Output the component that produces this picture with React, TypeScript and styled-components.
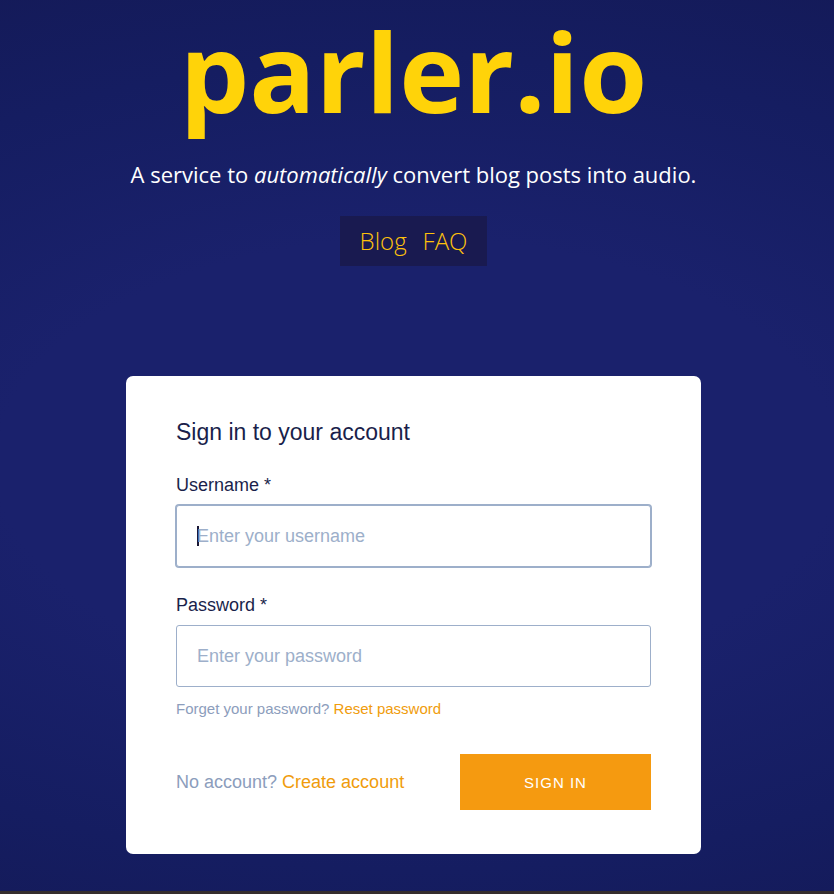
import React from "react";
import styled, { createGlobalStyle } from "styled-components";

const GlobalStyle = createGlobalStyle`
  *, *::before, *::after { box-sizing: border-box; }
  body { margin: 0; background: #141a58; }
`;

const Page = styled.div`
  min-height: 100vh;
  display: flex;
  flex-direction: column;
  align-items: center;
  padding-right: 7px;
  border-bottom: 3px solid #352d2d;
  background: radial-gradient(ellipse 120% 60% at 50% 52%, #1a216c 0%, #1a216c 42%, #151d61 76%, #141a58 100%);
  font-family: "Liberation Sans", Arial, sans-serif;
`;

const Header = styled.header`
  display: flex;
  flex-direction: column;
  align-items: center;
  font-family: "Open Sans", "Segoe UI", sans-serif;
`;

const Title = styled.h1`
  margin: 0;
  font-size: 110px;
  line-height: 140px;
  font-weight: 700;
  color: #ffd309;
`;

const Tagline = styled.p`
  margin: 18px 0 0;
  font-size: 22px;
  line-height: 32px;
  color: #fff;
  text-align: center;
`;

const Nav = styled.nav`
  display: flex;
  gap: 16px;
  margin-top: 26px;
  padding: 8px 20px;
  background: #191a50;
`;

const NavLink = styled.a`
  font-size: 24px;
  line-height: 34px;
  font-weight: 300;
  color: #ffc20c;
  text-decoration: none;
`;

const Card = styled.form`
  width: 100%;
  max-width: 575px;
  margin: 110px 0 37px;
  padding: 40px 50px 44px;
  border-radius: 7px;
  background: #fff;
`;

const CardTitle = styled.h2`
  margin: 0 0 26px;
  font-size: 23px;
  line-height: 32px;
  font-weight: 400;
  color: #1a1f4b;
`;

const Field = styled.div`
  display: flex;
  flex-direction: column;
`;

const Label = styled.label`
  margin-bottom: 9px;
  font-size: 18px;
  line-height: 22px;
  color: #1a1f4b;
`;

const Input = styled.input`
  height: 62px;
  padding: 0 20px;
  border: 1px solid #9dafca;
  border-radius: 3px;
  background: #fff;
  font: 18px "Liberation Sans", Arial, sans-serif;
  color: #1a1f4b;
  outline: none;

  &::placeholder { color: #9dafca; opacity: 1; }
  &:focus { box-shadow: 0 0 0 1px #9dafca; }

  /* A steady two-pixel caret while the box is empty. */
  &:focus:placeholder-shown {
    caret-color: transparent;
    background: #fff linear-gradient(#1a1734, #1a1734) 20px center / 2px 20px no-repeat;
  }
`;

const Fields = styled.div`
  display: flex;
  flex-direction: column;
  gap: 27px;
`;

const Hint = styled.p<{ $size: number }>`
  margin: 0;
  font-size: ${({ $size }) => $size}px;
  line-height: 20px;
  color: #8c9dbc;
`;

const TextLink = styled.a`
  color: #f09c0c;
  text-decoration: none;
`;

const PasswordHint = styled.div`
  margin-top: 12px;
`;

const Footer = styled.div`
  display: flex;
  flex-wrap: wrap;
  align-items: center;
  justify-content: space-between;
  gap: 16px;
  margin-top: 35px;
`;

const SubmitButton = styled.button`
  min-width: 191px;
  height: 56px;
  border: 0;
  background: #f59a10;
  color: #fff;
  font: 15px "Liberation Sans", Arial, sans-serif;
  letter-spacing: 1px;
  text-transform: uppercase;
`;

export default function App() {
  return (
    <>
      <GlobalStyle />
      <Page>
        <Header>
          <Title>parler.io</Title>
          <Tagline>
            A service to <em>automatically</em> convert blog posts into audio.
          </Tagline>
          <Nav>
            <NavLink href="#blog">Blog</NavLink>
            <NavLink href="#faq">FAQ</NavLink>
          </Nav>
        </Header>
        <Card onSubmit={(event) => event.preventDefault()}>
          <CardTitle>Sign in to your account</CardTitle>
          <Fields>
            <Field>
              <Label htmlFor="username">Username *</Label>
              <Input id="username" autoComplete="username" placeholder="Enter your username" autoFocus />
            </Field>
            <Field>
              <Label htmlFor="password">Password *</Label>
              <Input id="password" type="password" placeholder="Enter your password" />
              <PasswordHint>
                <Hint $size={15}>
                  Forget your password? <TextLink href="#reset">Reset password</TextLink>
                </Hint>
              </PasswordHint>
            </Field>
          </Fields>
          <Footer>
            <Hint $size={18}>
              No account? <TextLink href="#create">Create account</TextLink>
            </Hint>
            <SubmitButton type="submit">Sign in</SubmitButton>
          </Footer>
        </Card>
      </Page>
    </>
  );
}
